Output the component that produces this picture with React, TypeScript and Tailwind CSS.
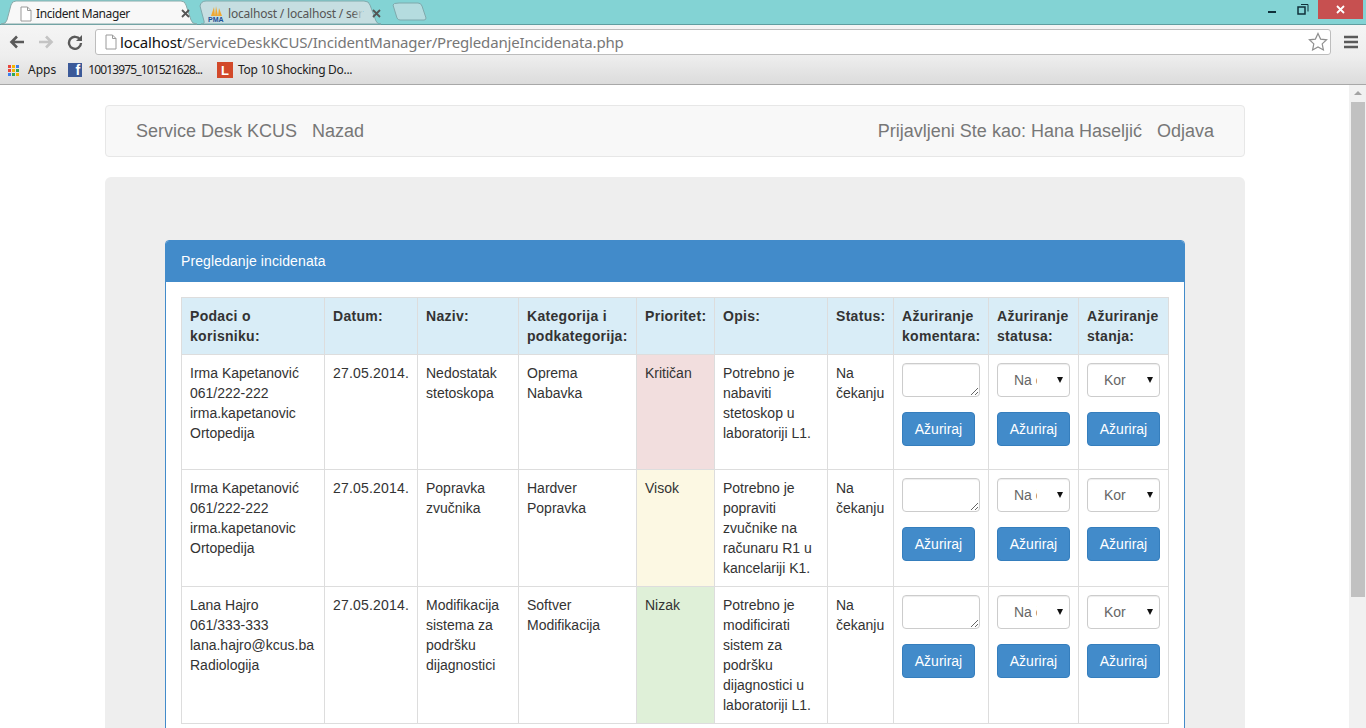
const rows = [
  {
    user: ["Irma Kapetanović", "061/222-222", "irma.kapetanovic", "Ortopedija"],
    name: "Nedostatak stetoskopa",
    category: ["Oprema", "Nabavka"],
    priority: "Kritičan",
    priorityClass: "bg-[#f2dede]",
    description: "Potrebno je nabaviti stetoskop u laboratoriji L1.",
    height: "h-[115px]",
  },
  {
    user: ["Irma Kapetanović", "061/222-222", "irma.kapetanovic", "Ortopedija"],
    name: "Popravka zvučnika",
    category: ["Hardver", "Popravka"],
    priority: "Visok",
    priorityClass: "bg-[#fcf8e3]",
    description: "Potrebno je popraviti zvučnike na računaru R1 u kancelariji K1.",
    height: "h-[117px]",
  },
  {
    user: ["Lana Hajro", "061/333-333", "lana.hajro@kcus.ba", "Radiologija"],
    name: "Modifikacija sistema za podršku dijagnostici",
    category: ["Softver", "Modifikacija"],
    priority: "Nizak",
    priorityClass: "bg-[#dff0d8]",
    description: "Potrebno je modificirati sistem za podršku dijagnostici u laboratoriji L1.",
    height: "h-[137px]",
  },
];

const headers = [
  "Podaci o korisniku:",
  "Datum:",
  "Naziv:",
  "Kategorija i podkategorija:",
  "Prioritet:",
  "Opis:",
  "Status:",
  "Ažuriranje komentara:",
  "Ažuriranje statusa:",
  "Ažuriranje stanja:",
];

const colWidths = ["w-[143px]", "w-[93px]", "w-[101px]", "w-[118px]", "w-[78px]", "w-[113px]", "w-[66px]", "w-[95px]", "w-[90px]", "w-[90px]"];

function PageIcon() {
  return (
    <svg width="14" height="16" viewBox="0 0 14 16" fill="none" className="shrink-0">
      <path d="M2 1h6.5L12 4.5V15H2z" fill="#fff" stroke="#9a9a9a" />
      <path d="M8.5 1v3.500H12" stroke="#9a9a9a" />
    </svg>
  );
}

function CloseX({ color = "#555" }: { color?: string }) {
  return (
    <svg width="9" height="9" viewBox="0 0 9 9" className="shrink-0">
      <path d="M1 1l7 7M8 1l-7 7" stroke={color} strokeWidth="1.800" />
    </svg>
  );
}

function TabStrip() {
  return (
    <div className="relative h-[25px] bg-[#83d3d4] border-b border-[#5f9ea0]">
      {/* tab shapes */}
      <svg width="440" height="25" viewBox="0 0 440 25" className="absolute left-0 top-0">
        <path d="M399 3h19q3 0 4 3l4 12q0 2-2 2h-24q-2 0-3-2l-4-13q0-2 6-2z" fill="#b5dcdf" stroke="#7fa9ac" />
        <path d="M201 24q4 0 3-3l-4-15q1-5 6-5h158q5 0 6 4l6 16q1 3 5 3z" fill="#c6dee1" stroke="#7fa9ac" />
        <path d="M1 24q5 0 6-4l4-15q1-4 5-4h165q4 0 5 4l5 15q1 4 6 4z" fill="#f8f8f8" stroke="#88aaaa" />
      </svg>
      <div className="absolute left-[19px] top-[5px] flex items-center w-[171px]">
        <PageIcon />
        <span className="ml-[3px] flex-1 pt-[1px] text-[12px] leading-[16px] tracking-[-0.4px] text-[#222]">Incident Manager</span>
        <CloseX />
      </div>
      <div className="absolute left-[208px] top-[4px] flex items-center w-[173px]">
        <svg width="16" height="17" viewBox="0 0 16 17" className="shrink-0">
          <path d="M3 11l3-9 1 9zM7 11l1-10 2 10zM10 11l1-8 3 8z" fill="#f0a830" />
          <text x="0" y="17" fontSize="7" fontWeight="700" fill="#1c4f96" fontFamily="Liberation Sans, sans-serif">PMA</text>
        </svg>
        <span className="relative ml-[4px] flex-1 pt-[2px] text-[12px] leading-[16px] tracking-[-0.2px] whitespace-nowrap text-[#555]">
          localhost / localhost / ser
          <span className="absolute right-[9px] top-0 h-full w-[10px] bg-gradient-to-r from-transparent to-[#c6dee1]" />
        </span>
        <span className="pt-[1px]"><CloseX /></span>
      </div>
      {/* window controls */}
      <div className="absolute right-[3px] top-0 flex items-start">
        <svg width="34" height="14" viewBox="0 0 34 14" className="mt-[4px]">
          <path d="M8 8h8" stroke="#10303a" strokeWidth="2" />
        </svg>
        <svg width="24" height="14" viewBox="0 0 24 14" className="mt-[3px]">
          <path d="M4 4h7v7H4z" fill="none" stroke="#10303a" strokeWidth="1.500" />
          <path d="M7 1.500h7v7" fill="none" stroke="#10303a" />
        </svg>
        <div className="flex h-[19px] w-[45px] items-center justify-center bg-[#c75050]">
          <CloseX color="#fff" />
        </div>
      </div>
    </div>
  );
}

function Toolbar() {
  return (
    <div className="flex h-[31px] items-center bg-gradient-to-b from-[#f5f5f5] to-[#eeeeee] pl-[9px] pt-[2px]">
      <svg width="16" height="14" viewBox="0 0 16 14">
        <path d="M15 7H3M8 1.500L2.500 7 8 12.500" fill="none" stroke="#5a5a5a" strokeWidth="2.600" />
      </svg>
      <svg width="16" height="14" viewBox="0 0 16 14" className="ml-[13px]">
        <path d="M1 7h12M8 1.500L13.500 7 8 12.500" fill="none" stroke="#c4c4c4" strokeWidth="2.600" />
      </svg>
      <svg width="16" height="16" viewBox="0 0 16 16" className="ml-[13px]">
        <path d="M13 5.500A6 6 0 1 0 14 9" fill="none" stroke="#5a5a5a" strokeWidth="2.400" />
        <path d="M15 1v6H9z" fill="#5a5a5a" />
      </svg>
      <div className="ml-[12px] flex h-[26px] w-[1236px] items-center rounded-[3px] border border-[#bdbdbd] bg-white pl-[8px] pr-[2px]">
        <PageIcon />
        <span className="ml-[2px] flex-1 text-[15px] leading-[20px] tracking-[-0.16px] text-[#777] font-['Noto_Sans',sans-serif]">
          <span className="text-[#111]">localhost</span>/ServiceDeskKCUS/IncidentManager/PregledanjeIncidenata.php
        </span>
        <svg width="20" height="19" viewBox="0 0 20 19">
          <path d="M10 1.500l2.600 5.600 6 .7-4.400 4.100 1.200 6L10 14.900l-5.400 3 1.200-6L1.400 7.800l6-.7z" fill="none" stroke="#8f8f8f" strokeWidth="1.200" />
        </svg>
      </div>
      <svg width="14" height="14" viewBox="0 0 14 14" className="ml-[13px]">
        <path d="M0 2h14M0 7h14M0 12h14" stroke="#5a5a5a" strokeWidth="2.400" />
      </svg>
    </div>
  );
}

function BookmarksBar() {
  const dots = ["#e8453c", "#f4b400", "#3b7ded", "#e8453c", "#f4b400", "#34a853", "#3b7ded", "#34a853", "#f4b400"];
  return (
    <div className="flex h-[29px] items-center border-b border-[#a8a8a8] bg-gradient-to-b from-[#eeeeee] to-[#dcdcdc] pl-[8px] text-[12px] text-[#222]">
      <div className="grid grid-cols-3 gap-[1px]">
        {dots.map((c, i) => (
          <span key={i} className="h-[3px] w-[3px]" style={{ backgroundColor: c }} />
        ))}
      </div>
      <span className="ml-[9px]">Apps</span>
      <span className="ml-[12px] flex h-[14px] w-[14px] items-end justify-end bg-[#3b5998] pr-[2px] text-[14px] font-bold leading-[13px] text-white font-['Liberation_Sans',sans-serif]">f</span>
      <span className="ml-[6px] tracking-[-0.85px]">10013975_101521628...</span>
      <span className="ml-[15px] flex h-[16px] w-[16px] items-center justify-center bg-[#d2492a] text-[13px] font-bold leading-none text-white font-['Liberation_Sans',sans-serif]">L</span>
      <span className="ml-[5px] tracking-[-0.3px]">Top 10 Shocking Do...</span>
    </div>
  );
}

function Scrollbar() {
  return (
    <div className="flex w-[17px] shrink-0 flex-col items-center bg-[#f1f1f1] pl-[1px]">
      <div className="mt-[6px] h-0 w-0 border-x-[4px] border-b-[4px] border-x-transparent border-b-[#a3a3a3]" />
      <div className="mt-[7px] h-[495px] w-[14px] bg-[#c1c1c1]" />
    </div>
  );
}

function UpdateButton() {
  return (
    <button className="h-[34px] w-[73px] rounded-[4px] border border-[#357ebd] bg-[#428bca] text-[14px] text-white">
      Ažuriraj
    </button>
  );
}

function StatusSelect({ value }: { value: string }) {
  return (
    <div className="relative h-[34px] w-[73px]">
      <select
        defaultValue={value}
        className="h-full w-full appearance-none rounded-[4px] border border-[#ccc] bg-white pl-[16px] pr-[32px] text-[14px] text-[#666] shadow-[inset_0_1px_1px_rgba(0,0,0,0.075)]"
      >
        <option>{value}</option>
      </select>
      <svg width="6" height="6" viewBox="0 0 6 6" className="pointer-events-none absolute right-[7px] top-[14px]">
        <path d="M0 0h6L3 6z" fill="#111" />
      </svg>
    </div>
  );
}

const cell = "border border-[#ddd] p-[8px] align-top";

export default function App() {
  return (
    <div className="h-[728px] w-[1366px] overflow-hidden bg-white font-['Liberation_Sans',Arial,sans-serif] text-[14px] leading-[20px] text-[#333]">
      <div className="font-['Noto_Sans',sans-serif]">
        <TabStrip />
        <Toolbar />
        <BookmarksBar />
      </div>
      <div className="flex h-[643px]">
        <main className="flex-1 overflow-hidden pl-[105px] pr-[104px] pt-[20px]">
          <nav className="flex h-[52px] items-center justify-between rounded-[4px] border border-[#e7e7e7] bg-[#f8f8f8] px-[30px] text-[18px] text-[#777]">
            <div className="flex gap-[15px]">
              <span>Service Desk KCUS</span>
              <span>Nazad</span>
            </div>
            <div className="flex gap-[15px]">
              <span>Prijavljeni Ste kao: Hana Haseljić</span>
              <span>Odjava</span>
            </div>
          </nav>
          <section className="mt-[20px] rounded-[6px] bg-[#eee] px-[60px] pt-[63px] pb-[40px]">
            <div className="rounded-[4px] border border-[#428bca] bg-white">
              <div className="flex h-[41px] items-center rounded-t-[3px] bg-[#428bca] px-[15px] pb-[2px] tracking-[0.1px] text-white">
                Pregledanje incidenata
              </div>
              <div className="p-[15px]">
                <table className="w-[987px] table-fixed border-collapse">
                  <colgroup>
                    {colWidths.map((w, i) => (
                      <col key={i} className={w} />
                    ))}
                  </colgroup>
                  <thead>
                    <tr className="h-[57px] bg-[#d9edf7]">
                      {headers.map((h) => (
                        <th key={h} className={`${cell} text-left font-bold tracking-[0.3px]`}>
                          {h}
                        </th>
                      ))}
                    </tr>
                  </thead>
                  <tbody>
                    {rows.map((r, i) => (
                      <tr key={i} className={r.height}>
                        <td className={cell}>
                          {r.user.map((line) => (
                            <div key={line} className="whitespace-nowrap">{line}</div>
                          ))}
                        </td>
                        <td className={`${cell} tracking-[0.2px]`}>27.05.2014.</td>
                        <td className={cell}>{r.name}</td>
                        <td className={cell}>
                          {r.category.map((line) => (
                            <div key={line}>{line}</div>
                          ))}
                        </td>
                        <td className={`${cell} ${r.priorityClass}`}>{r.priority}</td>
                        <td className={cell}>{r.description}</td>
                        <td className={cell}>Na čekanju</td>
                        <td className={cell}>
                          <div className="flex flex-col gap-[15px]">
                            <textarea className="block h-[34px] w-[78px] rounded-[4px] border border-[#ccc] bg-white shadow-[inset_0_1px_1px_rgba(0,0,0,0.075)]" />
                            <UpdateButton />
                          </div>
                        </td>
                        <td className={cell}>
                          <div className="flex flex-col gap-[15px]">
                            <StatusSelect value="Na čekanju" />
                            <UpdateButton />
                          </div>
                        </td>
                        <td className={cell}>
                          <div className="flex flex-col gap-[15px]">
                            <StatusSelect value="Kor" />
                            <UpdateButton />
                          </div>
                        </td>
                      </tr>
                    ))}
                  </tbody>
                </table>
              </div>
            </div>
          </section>
        </main>
        <Scrollbar />
      </div>
    </div>
  );
}
